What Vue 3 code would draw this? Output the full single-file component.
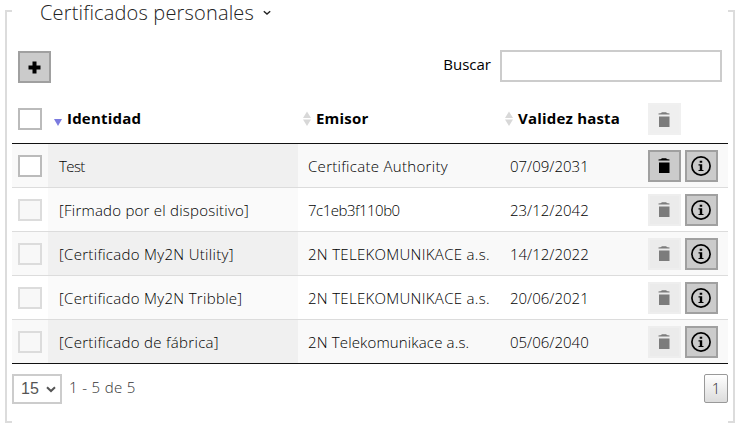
<script setup>
const rows = [
  { id: 'Test', issuer: 'Certificate Authority', until: '07/09/2031', editable: true, fit: 'short' },
  { id: '[Firmado por el dispositivo]', issuer: '7c1eb3f110b0', until: '23/12/2042', fit: 'serial' },
  { id: '[Certificado My2N Utility]', issuer: '2N TELEKOMUNIKACE a.s.', until: '14/12/2022' },
  { id: '[Certificado My2N Tribble]', issuer: '2N TELEKOMUNIKACE a.s.', until: '20/06/2021' },
  { id: '[Certificado de fábrica]', issuer: '2N Telekomunikace a.s.', until: '05/06/2040', fit: 'lower' },
]
const trash = 'M.5 2.500V1.500L3.500 1V.3h5V1l3 .5v1zM1 4.500h10.500V15H1z'
</script>

<template>
  <section class="panel">
    <span class="edge left"></span>
    <span class="edge right"></span>
    <h2 class="title">
      <span>Certificados personales</span>
      <svg width="8" height="6" viewBox="0 0 8 6"><path d="M.8 1.2 4 4 7.2 1.2" fill="none" stroke="#222" stroke-width="1.4" /></svg>
    </h2>
    <div class="toolbar">
      <button class="btn" aria-label="+">
        <svg width="13" height="13" viewBox="0 0 13 13"><path d="M4.500.5h4v4h4v4h-4v4h-4v-4h-4v-4h4z" /></svg>
      </button>
      <label class="search"><span>Buscar</span><input type="text" /></label>
    </div>

    <div class="table">
      <div class="row head">
        <div class="check"><span class="box"></span></div>
        <div class="hcell">
          <svg class="sort" width="8" height="16" viewBox="0 0 8 16"><path d="M0 8h8L4 15z" fill="#7b7bdf" /></svg>
          <span>Identidad</span>
        </div>
        <div class="hcell">
          <svg class="sort" width="8" height="16" viewBox="0 0 8 16"><path d="M0 7h8L4 .5zM0 8.500h8L4 15z" fill="#d8d8d8" /></svg>
          <span>Emisor</span>
        </div>
        <div class="hcell">
          <svg class="sort" width="8" height="16" viewBox="0 0 8 16"><path d="M0 7h8L4 .5zM0 8.500h8L4 15z" fill="#d8d8d8" /></svg>
          <span>Validez hasta</span>
        </div>
        <div class="actions">
          <button class="btn off" disabled><svg width="12" height="15" viewBox="0 0 12 15"><path :d="trash" /></svg></button>
        </div>
      </div>
      <div v-for="row in rows" :key="row.id" class="row body">
        <div class="check"><span class="box" :class="{ dim: !row.editable }"></span></div>
        <div class="cell ident" :class="row.fit"><span>{{ row.id }}</span></div>
        <div class="cell issuer" :class="row.fit"><span>{{ row.issuer }}</span></div>
        <div class="cell date" :class="row.fit"><span>{{ row.until }}</span></div>
        <div class="actions">
          <button class="btn" :class="{ off: !row.editable }"><svg width="12" height="15" viewBox="0 0 12 15"><path :d="trash" /></svg></button>
          <button class="btn info">
            <svg width="20" height="20" viewBox="0 0 20 20"><circle cx="10" cy="10" r="9.1" fill="none" stroke="#000" stroke-width="1.700" /><path d="M8.700 4.800h2.500v2H8.700zM7.500 8.300h3.700v5.600h1.300V15h-5v-1.100h1.300V9.400H7.500z" /></svg>
          </button>
        </div>
      </div>
    </div>

    <footer class="footer">
      <div class="select"><span>15</span><svg width="10" height="7" viewBox="0 0 10 7"><path d="M1 1.200 5 5 9 1.200" fill="none" stroke="#555" stroke-width="2" /></svg></div>
      <span class="count">1 - 5 de 5</span>
      <button class="page">1</button>
    </footer>
  </section>
</template>

<style>
body { background: #fff; }
</style>

<style scoped>
* { box-sizing: border-box; }
.panel { position: relative; height: 436px; padding: 0 15px 0 12px; font: 300 15px/20px "Open Sans", "Noto Sans", sans-serif; color: #000; white-space: nowrap; overflow: hidden; }
.edge { position: absolute; top: 10px; width: 7px; height: 413px; border: 2px solid #dcdcdc; }
.edge.left { left: 5px; border-right: 0; }
.edge.right { left: 728px; border-left: 0; }
.title { display: flex; align-items: center; gap: 9px; height: 26px; margin: 0; padding-left: 28px; font-size: 20px; font-weight: 300; letter-spacing: .17px; color: #222; }
.toolbar { display: flex; justify-content: space-between; align-items: flex-start; height: 69px; padding: 24px 6px 0; }
.toolbar > .btn { margin-top: 1px; }
.btn { display: flex; align-items: center; justify-content: center; width: 33px; height: 32px; padding: 0 1px 0 0; border: 2px solid #a0a0a0; background: #cbcbcb; }
.toolbar .btn { padding: 0; }
.btn.info { padding: 0 1px 0 0; }
.btn.off { border-color: #eee; background: #ebebeb; }
.head .btn.off { border-color: #f0f0f0; background: #efefef; }
.btn.off svg { fill: #7c7c7c; }
.search { display: flex; gap: 9px; font-weight: 400; line-height: 28px; }
.search input { width: 222px; height: 32px; padding: 0; border: 2px solid #ccc; background: #fff; }
.table { width: 716px; border-bottom: 1px solid #111; }
.row { display: grid; grid-template-columns: 36px 250px 202px 148px 80px; height: 44px; }
.row > div { display: flex; align-items: center; }
.row.head { height: 49px; border-bottom: 1px solid #111; font-weight: 700; letter-spacing: .2px; }
.body + .body { border-top: 1px solid #dcdcdc; }
.body:nth-child(2) { height: 43px; }
.body .ident { background: #fafafa; letter-spacing: .3px; }
.body:nth-child(even), .body:nth-child(even) .check { background: #f9f9f9; }
.body:nth-child(even) .ident { background: #f0f0f0; }
.row .check { padding-left: 6px; }
.box { width: 24px; height: 22px; border: 2px solid #bbb; background: #fff; }
.box.dim { border-color: #dcdcdc; background: #f8f8f8; }
.row .hcell { padding: 0 0 2px 6px; gap: 5px; }
.row .hcell:nth-child(n + 3) { padding-left: 5px; }
.hcell .sort { margin-top: 1px; }
.row .cell { padding-left: 10px; }
.row .ident { padding-left: 11px; }
.body .ident.short { letter-spacing: -.6px; }
.body .ident.serial { letter-spacing: .23px; }
.issuer { letter-spacing: .3px; }
.issuer.serial { letter-spacing: -.5px; }
.issuer.lower { letter-spacing: .15px; }
.row .actions { gap: 4px; }
.footer { display: flex; padding-top: 10px; color: #333; }
.select { display: flex; align-items: center; gap: 7px; width: 50px; height: 30px; padding-left: 7px; border: 2px solid #ccc; font: 16px "Liberation Sans", sans-serif; color: #555; }
.count { margin: 3px auto 0 7px; letter-spacing: .35px; }
.page { width: 24px; height: 29px; padding: 0 0 1px; border: 1px solid #999; border-radius: 2px; background: linear-gradient(#fff, #dcdcdc); font: inherit; color: #333; }
</style>
